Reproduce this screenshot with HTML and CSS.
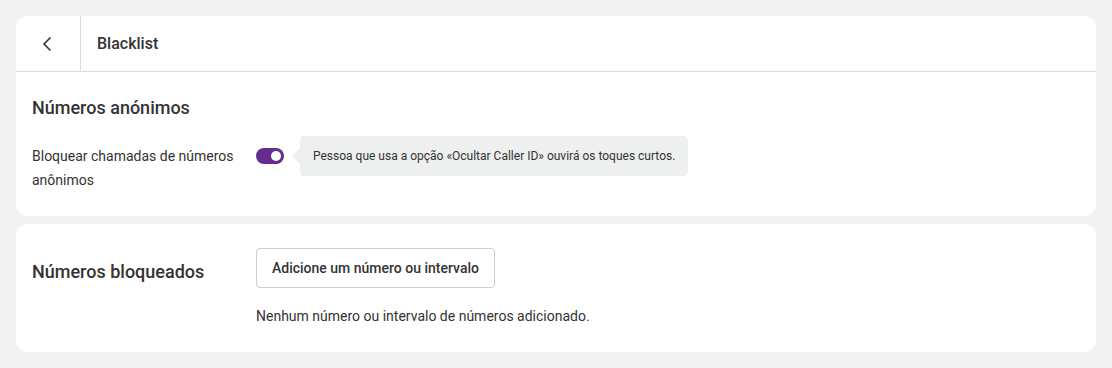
FILE: index.html
```html
<!DOCTYPE html>
<html lang="pt">

<head>
    <meta charset="UTF-8" />
    <title>Blacklist</title>
    <link rel="stylesheet" href="styles.css">
</head>

<body>
    <div class="page">
        <!-- 匿名号码 -->
        <div class="card">
            <div class="header">
                <div class="back">
                    <svg width="16" height="16" viewBox="0 0 16 16">
                        <path d="M10.5 1.5 L4 8 L10.5 14.5" fill="none" stroke="#333" stroke-width="1.6" />
                    </svg>
                </div>
                <div class="title">Blacklist</div>
            </div>
            <div class="section">
                <h4>Números anónimos</h4>
                <div class="row">
                    <div class="label">Bloquear chamadas de números anônimos</div>
                    <div class="toggle"><span class="knob"></span></div>
                    <div class="hint">Pessoa que usa a opção «Ocultar Caller ID» ouvirá os toques curtos.</div>
                </div>
            </div>
        </div>
        <!-- 已屏蔽号码 -->
        <div class="card blocked">
            <h4>Números bloqueados</h4>
            <div class="list">
                <button class="btn">Adicione um número ou intervalo</button>
                <p>Nenhum número ou intervalo de números adicionado.</p>
            </div>
        </div>
    </div>
</body>

</html>
```

FILE: styles.css
```css
body {
    margin: 0;
    padding: 0;
    background-color: #f1f2f1;
    font-family: Roboto, "Liberation Sans", sans-serif;
    color: #333;
}

.page {
    padding: 16px;
    display: flex;
    flex-direction: column;
    gap: 8px;
}

.card {
    background-color: #fff;
    border-radius: 12px;
}

.header {
    display: flex;
    height: 55px;
    border-bottom: 1px solid #dcdcdc;
}

.back {
    width: 64px;
    border-right: 1px solid #dcdcdc;
    display: flex;
    align-items: center;
    justify-content: center;
}

.back svg {
    display: block;
}

.title {
    display: flex;
    align-items: center;
    padding-left: 16px;
    font-size: 16px;
    font-weight: 500;
}

.section {
    padding: 24px 16px 24px;
}

h4 {
    margin: 0;
    font-size: 18px;
    font-weight: 500;
    line-height: 24px;
}

.row {
    display: flex;
    align-items: flex-start;
    margin-top: 16px;
}

.label {
    width: 224px;
    font-size: 14px;
    line-height: 24px;
    padding-top: 8px;
}

.toggle {
    width: 28px;
    height: 16px;
    margin-top: 12px;
    border-radius: 8px;
    background-color: #662d8c;
    position: relative;
}

.knob {
    position: absolute;
    right: 3px;
    top: 3px;
    width: 10px;
    height: 10px;
    border-radius: 50%;
    background-color: #fff;
}

.hint {
    position: relative;
    margin-left: 16px;
    padding: 12px 13px;
    font-size: 12px;
    line-height: 16px;
    background-color: #eef0ef;
    border-radius: 4px;
}

.hint::before {
    content: "";
    position: absolute;
    left: -8px;
    top: 12px;
    border-top: 8px solid transparent;
    border-bottom: 8px solid transparent;
    border-right: 8px solid #eef0ef;
}

.blocked {
    display: flex;
    padding: 24px 16px 28px;
}

.blocked h4 {
    width: 224px;
    padding-top: 12px;
}

.list p {
    margin: 20px 0 0;
    font-size: 14px;
    line-height: 16px;
}

.btn {
    display: block;
    height: 40px;
    padding: 0 15px;
    background-color: #fff;
    border: 1px solid #cfcfcf;
    border-radius: 4px;
    font-family: inherit;
    font-size: 14px;
    font-weight: 500;
    color: #333;
}
```
